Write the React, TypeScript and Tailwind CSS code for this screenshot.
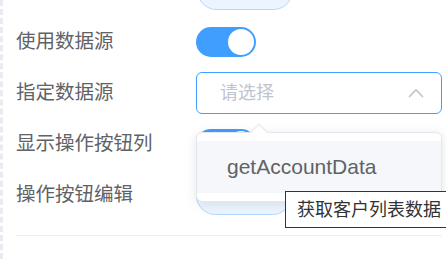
import React from "react";

const cjk = "font-['Liberation_Sans','Noto_Sans_CJK_SC',sans-serif]";

function Row({ label, children }: { label: string; children?: React.ReactNode }) {
  return (
    <div className="flex h-[51px] items-center">
      <div className={`w-[180px] shrink-0 text-[19.5px] leading-none text-[#606266] ${cjk}`}>
        {label}
      </div>
      <div className="relative flex items-center">{children}</div>
    </div>
  );
}

function Switch() {
  return (
    <div className="relative h-[30px] w-[60px] rounded-full bg-[#409eff]">
      <div className="absolute right-[2px] top-[2px] h-[26px] w-[26px] rounded-full bg-white" />
    </div>
  );
}

function PlainButton() {
  return <div className="h-[39px] w-[96px] rounded-full border border-[#b3d8ff] bg-[#ecf5ff]" />;
}

export default function App() {
  return (
    <div className="relative h-[259px] w-[446px] overflow-hidden border-l-[3px] border-dashed border-[#e9ebf0] bg-white">
      <div className="mt-[-35px] flex flex-col pl-[13px] pr-[4px]">
        <Row label="">
          <div className="ml-[1px]">
            <PlainButton />
          </div>
        </Row>
        <Row label="使用数据源">
          <Switch />
        </Row>
        <Row label="指定数据源">
          <div className="relative z-20">
            <div className="flex h-[42px] w-[246px] items-center justify-between rounded-[6px] border border-[#409eff] bg-white pl-[23px] pr-[17px]">
              <span className={`text-[18px] leading-none text-[#c0c4cc] ${cjk}`}>请选择</span>
              <svg width="16" height="10" viewBox="0 0 16 10" fill="none">
                <polyline points="1,9 8,2 15,9" stroke="#c0c4cc" strokeWidth="1.6" />
              </svg>
            </div>
            {/* dropdown */}
            <div className="absolute left-0 top-[60px] w-[246px] rounded-[6px] border border-[#e4e7ed] bg-white py-[8px] shadow-[0_2px_12px_0_rgba(0,0,0,0.1)]">
              <div className="absolute left-[56px] top-[-7px] h-[12px] w-[12px] rotate-45 border-l border-t border-[#e4e7ed] bg-white" />
              <div className="flex h-[52px] items-center bg-[#f5f7fa] pl-[30px] font-['Liberation_Sans',sans-serif] text-[21px] text-[#606266]">
                getAccountData
              </div>
            </div>
          </div>
        </Row>
        <Row label="显示操作按钮列">
          <Switch />
        </Row>
        <Row label="操作按钮编辑">
          <div className="mt-[2px]">
            <PlainButton />
          </div>
        </Row>
        <div className="mt-[15px] h-px bg-[#ebeef5]" />
      </div>
      {/* native title tooltip */}
      <div className={`absolute left-[282px] top-[191px] z-30 flex h-[37px] items-center whitespace-nowrap border border-[#333333] bg-white pl-[11px] pr-[12px] text-[18px] leading-none text-[#333333] ${cjk}`}>
        获取客户列表数据
      </div>
    </div>
  );
}
